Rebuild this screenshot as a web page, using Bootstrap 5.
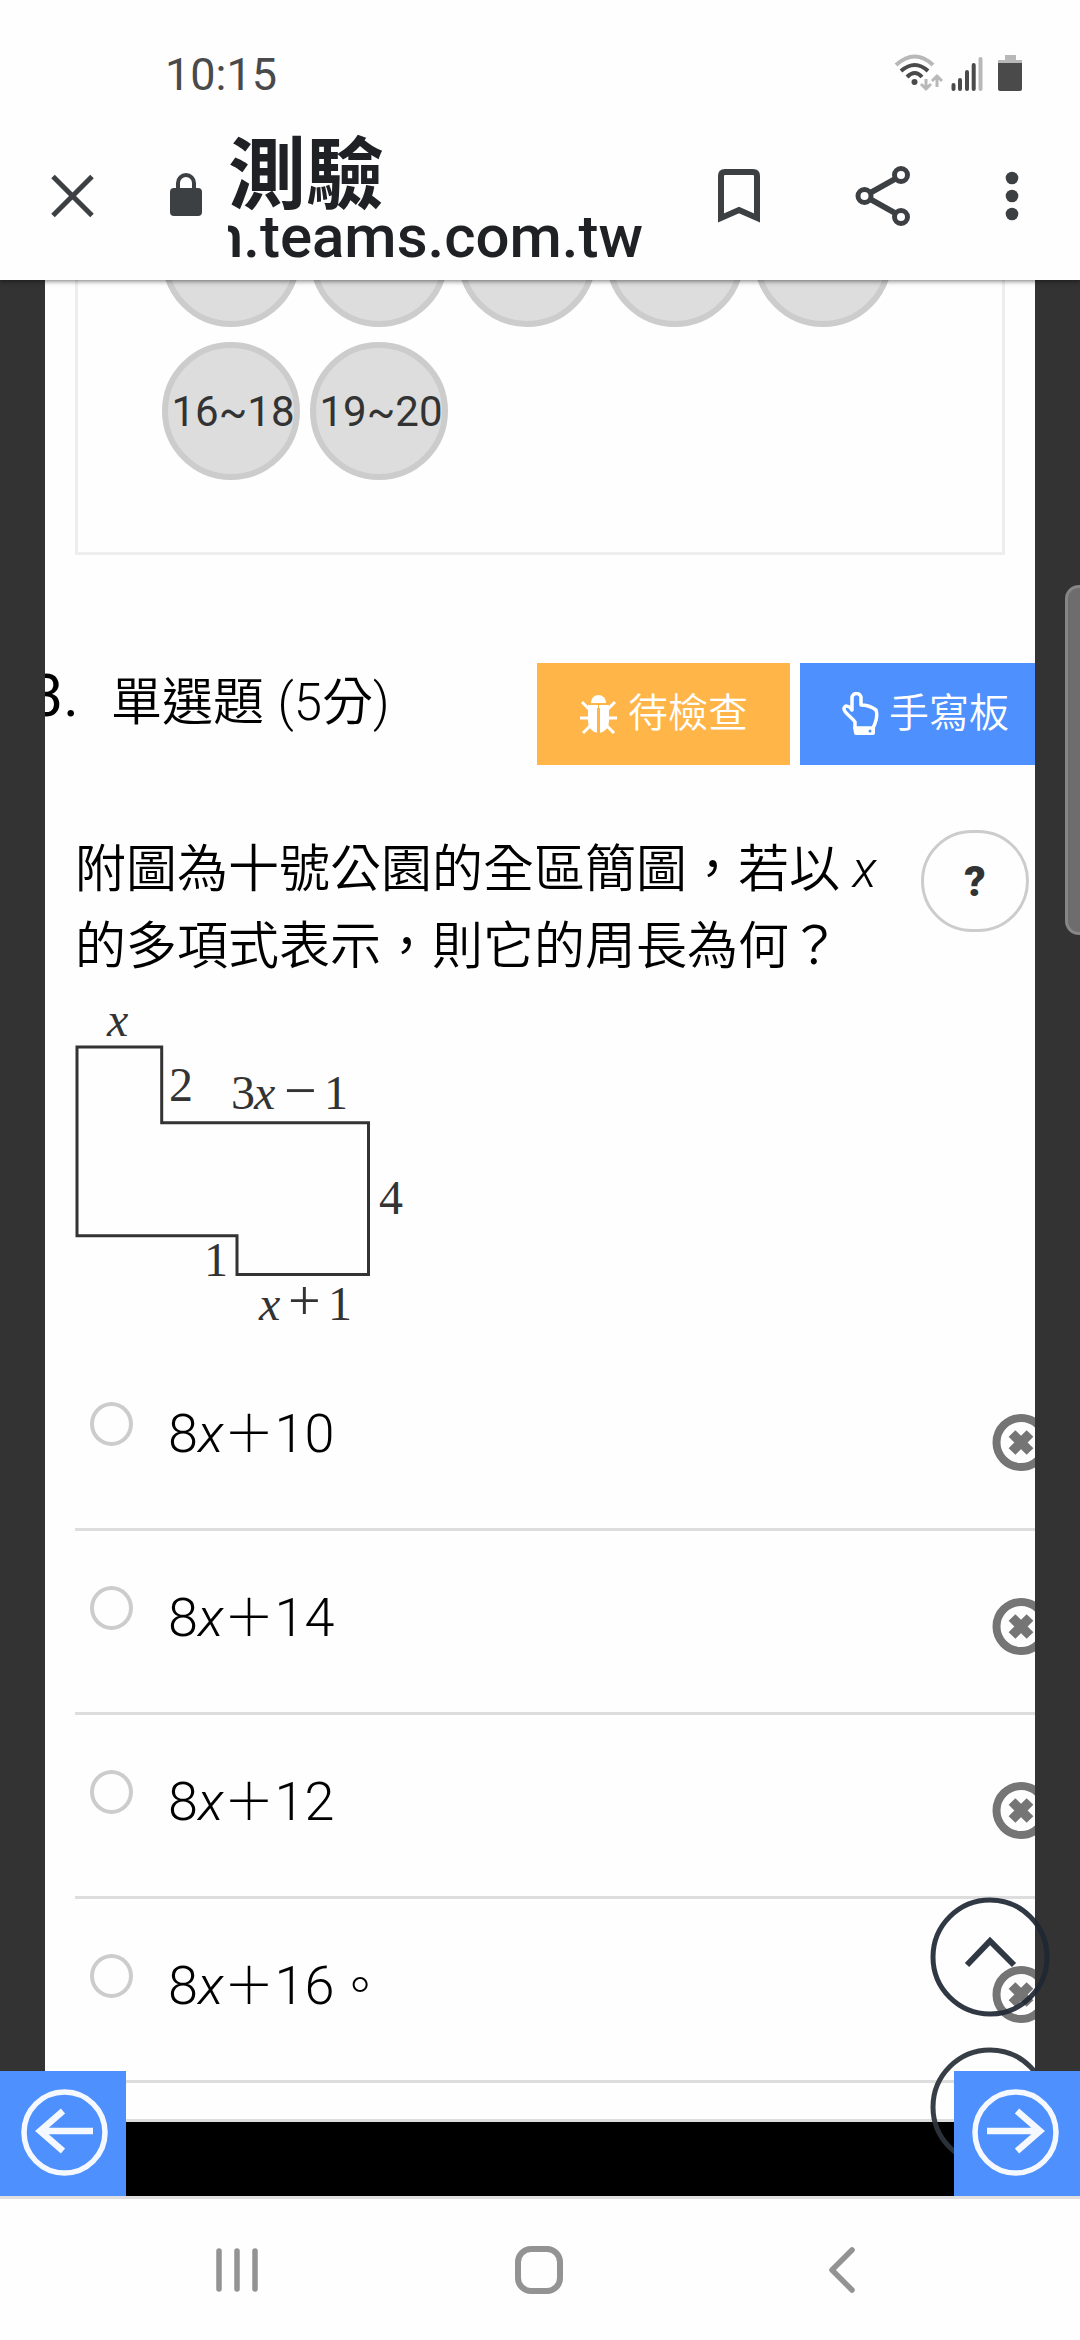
<!DOCTYPE html>
<html lang="zh-Hant">
<head>
<meta charset="utf-8">
<title>測驗</title>
<meta name="viewport" content="width=device-width, initial-scale=1">
<link href="https://cdn.jsdelivr.net/npm/bootstrap@5.3.0/dist/css/bootstrap.min.css" rel="stylesheet">
<style>
html,body{height:2340px;overflow:hidden}
body{font-family:Roboto,"Noto Sans CJK TC",sans-serif;color:#000;background:#fefefe}
svg{display:block;flex:none}
.app-top{height:280px;background:#fefefe;z-index:5;box-shadow:0 1px 5px rgba(0,0,0,.55)}
.status-row{height:112px;padding:21px 55px 0 165px;color:#4a4a4a}
.clock{font-size:45px;line-height:40px;padding-top:34px}
.status-ico{margin-top:29px}
.tool-row{height:168px}
.tool-row .close-ico{margin-left:48px}
.tool-row .lock-ico{margin-left:73px}
.addr{width:416px;margin-left:26px;color:#202124;font-weight:500}
.addr .ttl{font-size:78px;line-height:78px;height:78px;margin-top:26px;font-weight:600}
.addr .host{font-size:60px;line-height:52px;height:60px;width:415px;margin-top:-5px;overflow:hidden;display:flex;justify-content:flex-end}
.stage{height:1916px;background:#333}
.sheet{width:990px;margin:0 45px;background:#fefefe;height:1842px}
.pager-box{height:275px;margin:0 30px;border:3px solid #eee;border-top:0;padding:0 84px;overflow:hidden}
.dots{display:grid;grid-template-columns:repeat(5,138px);gap:15px 10px;margin-top:-91px}
.dot{height:138px;border-radius:50%;border:6px solid #ccc;background:#ddd;color:#333;font-size:42px;padding-left:4px;display:flex;align-items:center;justify-content:center;white-space:nowrap}
.q-head{margin-top:108px;height:102px}
.q-no{font-size:59px;line-height:66px;width:66px;margin-left:-15px;height:66px}
.q-kind{font-size:51px;line-height:80px;font-weight:350;margin-left:15px;word-spacing:1px}
.tag-btn{height:102px;border-radius:0;border:0;color:#fff;font-size:40px;font-weight:350;line-height:102px;padding:0;white-space:nowrap}
.tag-wait{width:253px;background:#ffb547;padding-left:43px}
.tag-wait span{margin-left:11px}
.tag-pad{width:235px;background:#4d90fe;margin-left:10px;padding-left:42px}
.tag-pad span{margin-left:10px}
.q-body{height:181px;margin-top:64px;padding-left:30px}
.q-text{width:830px;font-size:51px;line-height:77px;font-weight:350;margin:0;padding-top:2px}
.help{width:108px;height:102px;border:3px solid #ccc;border-radius:52px;color:#333;font-weight:900;font-size:42px;padding:0;margin-left:16px;margin-top:1px}
.fig{margin-left:30px}
.opt{height:184px;border-bottom:3px solid #ddd;margin-left:30px;font-size:54px;font-weight:300}
.opt .ring{width:43px;height:44px;margin:55px 0 0 15px;border:4px solid #ccc;border-radius:50%;flex:none}
.opt .val{margin:47px 0 0 35px;line-height:80px;white-space:nowrap}
.opt .val .pl{font-size:51px}
.opt .del{margin-left:auto;margin-top:67px;width:43px}
.tail{height:39px;border-bottom:3px solid #ddd}
.bar-black{height:74px;background:#000}
.corner{width:126px;height:125px;background:#4d90fe;bottom:0;z-index:3}
.up-btn{left:930px;z-index:2}
.handle{right:-3px;top:305px;width:18px;height:350px;background:#6d6d6d;border:3px solid #868686;border-radius:14px 0 0 14px}
.sys-nav{height:144px;border-top:3px solid #dfdfdf;background:#fefefe;padding:1px 224px 0 215px}
.home-ico{margin-right:10px}
</style>
<script src="https://cdn.jsdelivr.net/npm/bootstrap@5.3.0/dist/js/bootstrap.bundle.min.js"></script>
</head>
<body>
<header class="app-top position-relative">
  <div class="status-row d-flex justify-content-between">
    <div class="clock">10:15</div>
    <svg class="status-ico" width="132" height="44" viewBox="893 50 132 44">
      <g fill="none" stroke-linecap="butt" stroke-width="4">
        <path d="M896 65Q915 48 933 65" stroke="#b8b8b8"/>
        <path d="M901 71Q915 59 928 71" stroke="#4a4a4a"/>
        <path d="M907 77Q915 69 922 77" stroke="#4a4a4a"/>
        <path d="M926 79V89M921 84L926 89L931 84M937 87V77M932 81L937 76L942 81" stroke="#b8b8b8" stroke-width="3"/>
        <g stroke="#4a4a4a" stroke-linecap="round"><path d="M953.500 85V89M960 80V89M967 72V89M973.700 65V89"/><path d="M980.500 59V89" stroke="#b8b8b8"/></g>
      </g>
      <circle cx="914.500" cy="82" r="3" fill="#4a4a4a"/>
      <path d="M1005 55h11v5h6v3h-24v-3h7z" fill="#b8b8b8"/><path d="M998 63h24v26q0 2-2 2h-20q-2 0-2-2z" fill="#4a4a4a"/>
    </svg>
  </div>
  <div class="tool-row d-flex">
    <svg class="close-ico" width="49" height="168" viewBox="48 112 49 168"><path d="M53 176.500L92 215.500M92 176.500L53 215.500" stroke="#3c4043" stroke-width="5"/></svg>
    <svg class="lock-ico" width="32" height="168" viewBox="170 112 32 168"><path d="M178 190v-7a8 8 0 0 1 16 0v7" fill="none" stroke="#3c4043" stroke-width="4"/><rect x="170" y="188" width="32" height="28" rx="4" fill="#3c4043"/></svg>
    <div class="addr">
      <div class="ttl">測驗</div>
      <div class="host"><span>m.teams.com.tw</span></div>
    </div>
    <svg width="420" height="168" viewBox="643 112 420 168">
      <path d="M720 218V176q0-4 4-4h28q4 0 4 4v42l-18-8z" fill="none" stroke="#3c4043" stroke-width="6"/>
      <g fill="none" stroke="#3c4043" stroke-width="5"><path d="M894 179L869 193M869 199L894 213" stroke-width="6"/><circle cx="900" cy="175" r="6.500"/><circle cx="863.500" cy="196" r="6.500"/><circle cx="900" cy="217" r="6.500"/></g>
      <g fill="#3c4043"><circle cx="1011" cy="178" r="6.300"/><circle cx="1011" cy="196" r="6.300"/><circle cx="1011" cy="214" r="6.300"/></g>
    </svg>
  </div>
</header>

<main class="stage position-relative overflow-hidden">
  <div class="sheet overflow-hidden">
    <section class="pager-box">
      <div class="dots">
        <div class="dot"></div><div class="dot"></div><div class="dot"></div><div class="dot"></div><div class="dot"></div>
        <div class="dot">16~18</div><div class="dot">19~20</div>
      </div>
    </section>
    <div class="q-head d-flex">
      <div class="q-no">3.</div>
      <div class="q-kind">單選題 (5分)</div>
      <button class="tag-btn tag-wait btn d-flex align-items-center ms-auto">
        <svg width="37" height="40" viewBox="0 0 37 40"><g fill="#fff"><path d="M11 9a7.500 8 0 0 1 15 0z"/><path d="M8 11h10v28q-10-2-10-12zM19 11h10v16q0 10-10 12z"/><path d="M17 14h3v26h-3z" fill="#ffb547"/></g><path d="M2 8l7 7M35 8l-7 7M0 24h8M37 24h-8M3 39l7-7M34 39l-7-7" stroke="#fff" stroke-width="3"/></svg>
        <span>待檢查</span>
      </button>
      <button class="tag-btn tag-pad btn d-flex align-items-center">
        <svg width="37" height="44" viewBox="0 0 37 44"><path d="M13 36v-6C11 26 2 21 2 17c0-4 5-4 8 1V6a4 4 0 0 1 9 0v7c6 0 11 2 15 5 2 6 0 12-3 18z" fill="none" stroke="#fff" stroke-width="3.500" stroke-linejoin="round"/><path d="M11 35h22v6q0 2-2 2H14q-2 0-2-2z" fill="#fff"/><circle cx="28" cy="39" r="1.500" fill="#4d90fe"/></svg>
        <span>手寫板</span>
      </button>
    </div>
    <div class="q-body d-flex">
      <p class="q-text">附圖為十號公園的全區簡圖，若以 <i>x</i> 的多項式表示，則它的周長為何？</p>
      <button class="help btn">?</button>
    </div>
    <svg class="fig" width="340" height="337" viewBox="75 1010 340 337">
      <path d="M77 1047H161.700V1122.700H368.500V1274.500H237V1235.700H77Z" fill="none" stroke="#333" stroke-width="3"/>
      <g font-family="'Liberation Serif',serif" font-size="48" fill="#333">
        <text x="107" y="1036" font-style="italic">x</text>
        <text x="169" y="1101">2</text>
        <text x="231" y="1109">3<tspan x="254" font-style="italic">x</tspan><tspan x="284" y="1110" font-size="58">−</tspan><tspan x="324" y="1109">1</tspan></text>
        <text x="379" y="1214">4</text>
        <text x="204" y="1276">1</text>
        <text x="259" y="1319.500"><tspan font-style="italic">x</tspan><tspan x="288" y="1320" font-size="58">+</tspan><tspan x="328" y="1319.500">1</tspan></text>
      </g>
    </svg>
    <div class="opt d-flex"><span class="ring"></span><span class="val">8<i>x</i><span class="pl">＋</span>10</span><svg class="del" width="43" height="57" viewBox="0 0 43 57"><use href="#del"/></svg></div>
    <div class="opt d-flex"><span class="ring"></span><span class="val">8<i>x</i><span class="pl">＋</span>14</span><svg class="del" width="43" height="57" viewBox="0 0 43 57"><use href="#del"/></svg></div>
    <div class="opt d-flex"><span class="ring"></span><span class="val">8<i>x</i><span class="pl">＋</span>12</span><svg class="del" width="43" height="57" viewBox="0 0 43 57"><use href="#del"/></svg></div>
    <div class="opt d-flex"><span class="ring"></span><span class="val">8<i>x</i><span class="pl">＋</span>16<span class="pl">。</span></span><svg class="del" width="43" height="57" viewBox="0 0 43 57"><use href="#del"/></svg></div>
    <div class="tail"></div>
  </div>
  <div class="bar-black"></div>

  <svg class="up-btn position-absolute" style="top:1617px" width="120" height="120" viewBox="0 0 120 120"><g fill="none" stroke="#1d2733" stroke-opacity=".92" stroke-width="5"><circle cx="60" cy="60" r="57"/><path d="M37 68L60 44L84 68" stroke-width="6"/></g></svg>
  <svg class="up-btn position-absolute" style="top:1767px" width="120" height="120" viewBox="0 0 120 120"><circle cx="60" cy="60" r="57" fill="none" stroke="#2c343b" stroke-opacity=".95" stroke-width="5"/></svg>
  <div class="corner position-absolute start-0"><svg width="126" height="125" viewBox="0 0 126 125"><g fill="none" stroke="#f5f9ff"><circle cx="64.500" cy="61.500" r="40.500" stroke-width="5.500"/><path d="M93 60H40M63 40L40 60L63 80" stroke-width="6.500"/></g></svg></div>
  <div class="corner position-absolute end-0"><svg width="126" height="125" viewBox="0 0 126 125"><g fill="none" stroke="#f5f9ff"><circle cx="61.500" cy="61.500" r="40.500" stroke-width="5.500"/><path d="M33 60H86M63 40L86 60L63 80" stroke-width="6.500"/></g></svg></div>
  <div class="handle position-absolute"></div>
</main>

<footer class="sys-nav d-flex align-items-center justify-content-between">
  <svg width="44" height="50" viewBox="215 2246 44 50"><path d="M219 2252V2290M237 2252V2290M255 2252V2290" stroke="#939393" stroke-width="5.500" stroke-linecap="round"/></svg>
  <svg class="home-ico" width="50" height="50" viewBox="514 2246 50 50"><rect x="518" y="2250" width="42" height="42" rx="13" fill="none" stroke="#939393" stroke-width="6"/></svg>
  <svg width="28" height="50" viewBox="828 2246 28 50"><path d="M852 2251L832 2271L852 2291" fill="none" stroke="#939393" stroke-width="5.500" stroke-linecap="round" stroke-linejoin="round"/></svg>
</footer>

<svg width="0" height="0" class="position-absolute"><defs><g id="del"><circle cx="29" cy="28.500" r="24.500" fill="none" stroke="#757575" stroke-width="8"/><path d="M20 19.500L38 37.500M38 19.500L20 37.500" stroke="#757575" stroke-width="9.500"/></g></defs></svg>
</body>
</html>
